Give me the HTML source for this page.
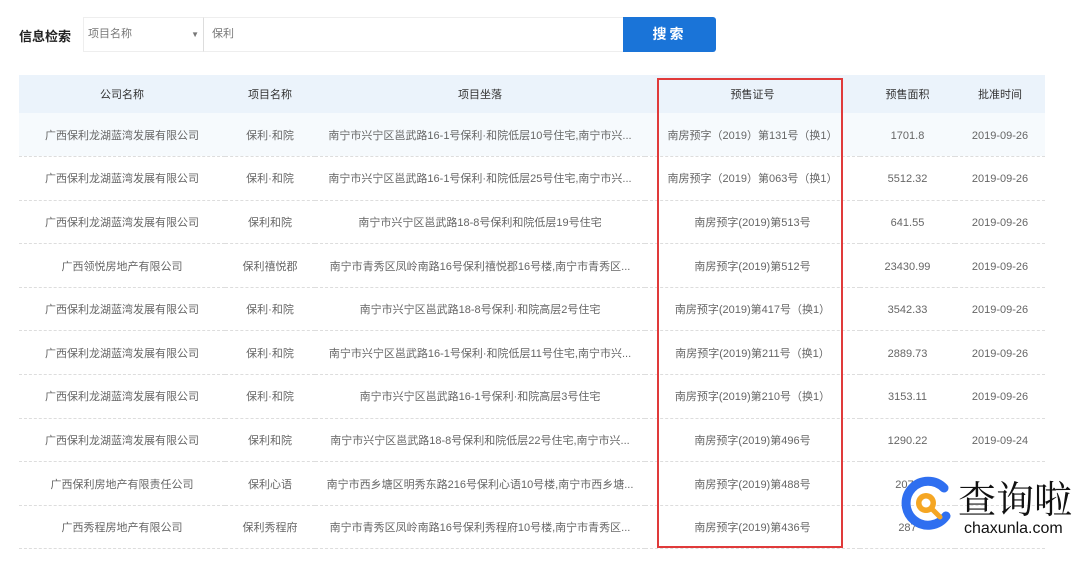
<!DOCTYPE html><html><head><meta charset="utf-8"><style>
body{margin:0;width:1080px;height:562px;background:#fff;font-family:"Liberation Sans","Noto Sans CJK SC",sans-serif;position:relative;overflow:hidden;color:#666}
.abs{position:absolute}
table{position:absolute;left:19px;top:75px;width:1026px;border-collapse:collapse;font-size:11px;table-layout:fixed}
th{height:38px;padding:0;background:#ebf3fb;font-weight:normal;color:#333;font-size:11px}
td{height:43.6px;padding:2px 0 0 0;box-sizing:border-box;text-align:center;border-bottom:1px dashed #ddd;color:#666;white-space:nowrap;overflow:hidden;line-height:14px}
tr.f td{background:#f6fafd}
</style></head><body>
<div class="abs" style="left:19px;top:26px;font-size:13px;font-weight:bold;color:#222">信息检索</div>
<div class="abs" style="left:83px;top:17px;width:119px;height:33px;border:1px solid #eee;font-size:11px;color:#777;line-height:33px;text-indent:4px">项目名称<span style="position:absolute;right:4px;font-size:8px">▼</span></div>
<div class="abs" style="left:203px;top:17px;width:419px;height:33px;border:1px solid #eee;border-left:1px solid #ddd;font-size:11px;color:#777;line-height:33px;text-indent:8px">保利</div>
<div class="abs" style="left:623px;top:17px;width:93px;height:35px;background:#1a74d8;border-radius:0 3px 3px 0;color:#fff;font-size:14px;font-weight:bold;text-align:center;line-height:35px;letter-spacing:3px">搜索</div>
<table>
<colgroup><col style="width:206px"><col style="width:90px"><col style="width:330px"><col style="width:215px"><col style="width:95px"><col style="width:90px"></colgroup>
<tr><th>公司名称</th><th>项目名称</th><th>项目坐落</th><th>预售证号</th><th>预售面积</th><th>批准时间</th></tr>
<tr class="f"><td>广西保利龙湖蓝湾发展有限公司</td><td>保利·和院</td><td>南宁市兴宁区邕武路16-1号保利·和院低层10号住宅,南宁市兴...</td><td>南房预字（2019）第131号（换1）</td><td>1701.8</td><td>2019-09-26</td></tr>
<tr><td>广西保利龙湖蓝湾发展有限公司</td><td>保利·和院</td><td>南宁市兴宁区邕武路16-1号保利·和院低层25号住宅,南宁市兴...</td><td>南房预字（2019）第063号（换1）</td><td>5512.32</td><td>2019-09-26</td></tr>
<tr><td>广西保利龙湖蓝湾发展有限公司</td><td>保利和院</td><td>南宁市兴宁区邕武路18-8号保利和院低层19号住宅</td><td>南房预字(2019)第513号</td><td>641.55</td><td>2019-09-26</td></tr>
<tr><td>广西领悦房地产有限公司</td><td>保利禧悦郡</td><td>南宁市青秀区凤岭南路16号保利禧悦郡16号楼,南宁市青秀区...</td><td>南房预字(2019)第512号</td><td>23430.99</td><td>2019-09-26</td></tr>
<tr><td>广西保利龙湖蓝湾发展有限公司</td><td>保利·和院</td><td>南宁市兴宁区邕武路18-8号保利·和院高层2号住宅</td><td>南房预字(2019)第417号（换1）</td><td>3542.33</td><td>2019-09-26</td></tr>
<tr><td>广西保利龙湖蓝湾发展有限公司</td><td>保利·和院</td><td>南宁市兴宁区邕武路16-1号保利·和院低层11号住宅,南宁市兴...</td><td>南房预字(2019)第211号（换1）</td><td>2889.73</td><td>2019-09-26</td></tr>
<tr><td>广西保利龙湖蓝湾发展有限公司</td><td>保利·和院</td><td>南宁市兴宁区邕武路16-1号保利·和院高层3号住宅</td><td>南房预字(2019)第210号（换1）</td><td>3153.11</td><td>2019-09-26</td></tr>
<tr><td>广西保利龙湖蓝湾发展有限公司</td><td>保利和院</td><td>南宁市兴宁区邕武路18-8号保利和院低层22号住宅,南宁市兴...</td><td>南房预字(2019)第496号</td><td>1290.22</td><td>2019-09-24</td></tr>
<tr><td>广西保利房地产有限责任公司</td><td>保利心语</td><td>南宁市西乡塘区明秀东路216号保利心语10号楼,南宁市西乡塘...</td><td>南房预字(2019)第488号</td><td>2075</td><td></td></tr>
<tr><td>广西秀程房地产有限公司</td><td>保利秀程府</td><td>南宁市青秀区凤岭南路16号保利秀程府10号楼,南宁市青秀区...</td><td>南房预字(2019)第436号</td><td>287</td><td></td></tr>
</table>
<div class="abs" style="left:657px;top:78px;width:182px;height:466px;border:2px solid #e03a3a"></div>
<svg class="abs" style="left:900px;top:476px" width="56" height="56" viewBox="0 0 56 56">
<path d="M44 12 A22 22 0 1 0 46 40" fill="none" stroke="#2f6ff0" stroke-width="9" stroke-linecap="round"/>
<circle cx="26" cy="27" r="10" fill="#f5a623"/><circle cx="26" cy="27" r="4.5" fill="#fff"/>
<line x1="33" y1="34" x2="40" y2="41" stroke="#f5a623" stroke-width="5" stroke-linecap="round"/>
</svg>
<div class="abs" style="left:958px;top:474px;font-size:38px;color:#111;font-family:'Noto Serif CJK SC',serif;line-height:46px">查询啦</div>
<div class="abs" style="left:964px;top:520px;font-size:16px;color:#111">chaxunla.com</div>
</body></html>
